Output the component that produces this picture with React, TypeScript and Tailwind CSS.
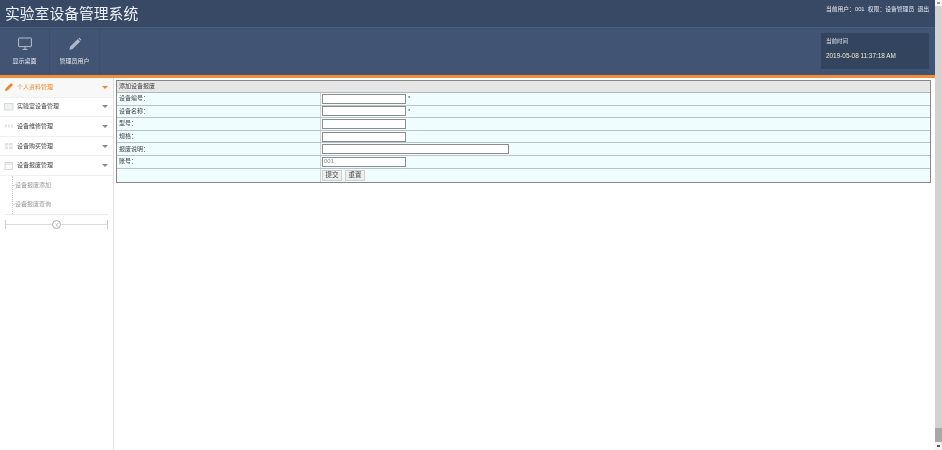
import React from "react";
import { ChevronLeft } from "lucide-react";

const cjk = "font-['Liberation_Sans','Noto_Sans_CJK_SC',sans-serif]";

function Caret({ color = "border-t-[#777]" }: { color?: string }) {
  return <span className={`w-0 h-0 border-x-[3px] border-x-transparent border-t-[3px] ${color}`} />;
}

function MenuIcon({ kind }: { kind: string }) {
  if (kind === "pencil")
    return (
      <svg width="10" height="10" viewBox="0 0 10 10"><path d="M1 9l.6-2.6L7 1l2 2-5.4 5.4z" fill="#e98a2e" /></svg>
    );
  if (kind === "tablet")
    return (
      <svg width="10" height="10" viewBox="0 0 10 10"><rect x="0.5" y="1.5" width="8.5" height="6.5" fill="#f0f1f2" stroke="#d8dadd" /></svg>
    );
  if (kind === "bars")
    return (
      <svg width="10" height="10" viewBox="0 0 10 10"><path d="M1 3.5h1.6v3H1zM4 3.5h1.6v3H4zM7 3.5h1.6v3H7z" fill="#dcdee1" /></svg>
    );
  if (kind === "grid")
    return (
      <svg width="10" height="10" viewBox="0 0 10 10"><path d="M.8 2h3.4v2.6H.8zM5 2h3.6v2.6H5zM.8 5.4h3.4V8H.8zM5 5.4h3.6V8H5z" fill="#dfe1e4" /></svg>
    );
  return (
    <svg width="10" height="10" viewBox="0 0 10 10"><rect x="1" y="1.5" width="7.5" height="7" fill="#fbfbfb" stroke="#d8dadd" /><path d="M1 3h7.5" stroke="#d8dadd" /></svg>
  );
}

const menus = [
  { icon: "pencil", label: "个人资料管理", active: true },
  { icon: "tablet", label: "实验室设备管理" },
  { icon: "bars", label: "设备维修管理" },
  { icon: "grid", label: "设备购买管理" },
  { icon: "cal", label: "设备报废管理" },
];

const rows = [
  { label: "设备编号：", w: "w-[84px]", star: true },
  { label: "设备名称：", w: "w-[84px]", star: true },
  { label: "型号：", w: "w-[84px]" },
  { label: "规格：", w: "w-[84px]" },
  { label: "报废说明：", w: "w-[187px]" },
  { label: "账号：", w: "w-[84px]", value: "001" },
];

export default function App() {
  return (
    <div className={`h-[450px] w-[942px] overflow-hidden flex bg-white blur-[0.35px] ${cjk}`}>
      <div className="w-[935px] flex flex-col shrink-0">
        <header className="h-[78px] shrink-0 flex flex-col bg-[#415473] border-b-[3px] border-[#ef8f3a]">
          <div className="h-[28px] shrink-0 flex justify-between items-center bg-[#384966] border-b border-[#4a5e7e] pl-[5px] pr-[6px]">
            <h1 className="text-[14.8px] leading-none mt-[1px] text-[#eef1f5]">实验室设备管理系统</h1>
            <div className="text-[5.8px] text-[#e4e8ee] -mt-[9px] whitespace-nowrap">当前用户：001 &nbsp;权限：设备管理员 &nbsp;退出</div>
          </div>
          <div className="flex-1 flex justify-between">
            <div className="flex">
              <div className="w-[50px] flex flex-col items-center pt-[9px] border-r border-[#3c4f6e]">
                <svg width="14" height="14" viewBox="0 0 14 14" fill="none" stroke="#c5ccd6" strokeWidth="0.9">
                  <rect x="0.6" y="1" width="12.8" height="8.6" rx="0.6" />
                  <path d="M7 9.6v2.6M4.6 12.4h4.8" />
                </svg>
                <span className="text-[6px] leading-none mt-[7px] text-[#e2e6ec]">显示桌面</span>
              </div>
              <div className="w-[50px] flex flex-col items-center pt-[9px] border-r border-[#3c4f6e]">
                <svg width="14" height="14" viewBox="0 0 14 14">
                  <path d="M1.4 13l.8-3.4L9.8 2l2.4 2.4-7.6 7.6z" fill="#aeb7c4" />
                  <path d="M10.4 1.4l.8-.8 2.2 2.2-.8.8z" fill="#aeb7c4" />
                </svg>
                <span className="text-[6px] leading-none mt-[7px] text-[#e2e6ec]">管理员用户</span>
              </div>
            </div>
            <div className="w-[108px] h-[36px] mt-[5px] mr-[6px] bg-[#33445f] pl-[5px] pt-[6px] flex flex-col">
              <span className="text-[5.5px] leading-none text-[#dde1e8]">当前时间</span>
              <span className="text-[6.4px] leading-none mt-[8px] text-[#efeccd] whitespace-nowrap">2019-05-08 11:37:18 AM</span>
            </div>
          </div>
        </header>
        <div className="flex-1 flex min-h-0">
          <aside className="w-[114px] shrink-0 border-r border-[#e0e0e0] bg-white flex flex-col">
            {menus.map((m) => (
              <div
                key={m.label}
                className={`h-[19.6px] shrink-0 flex items-center pl-[4px] pr-[5px] border-b border-[#f0f0f0] ${m.active ? "bg-[#f8f8f8]" : ""}`}
              >
                <MenuIcon kind={m.icon} />
                <span className={`ml-[3px] text-[6px] flex-1 ${m.active ? "text-[#e98a2e]" : "text-[#444]"}`}>{m.label}</span>
                <Caret color={m.active ? "border-t-[#e98a2e]" : "border-t-[#888]"} />
              </div>
            ))}
            <div className="flex flex-col ml-[12px] border-l border-dotted border-[#ccc]">
              {["设备报废添加", "设备报废查询"].map((s) => (
                <div key={s} className="h-[19px] flex items-center text-[6px] text-[#999] whitespace-nowrap">-{s}</div>
              ))}
            </div>
            <div className="border-t border-[#ececec] h-[21px] mx-[5px] flex items-center">
              <span className="h-[9px] border-l border-[#ccc]" />
              <span className="flex-1 border-t border-[#ddd]" />
              <span className="w-[9px] h-[9px] rounded-full border border-[#aaa] flex items-center justify-center bg-white">
                <ChevronLeft size={6} color="#666" />
              </span>
              <span className="flex-1 border-t border-[#ddd]" />
              <span className="h-[9px] border-l border-[#ccc]" />
            </div>
          </aside>
          <main className="flex-1 pl-[2px] pt-[2px] pr-[4px]">
            <div className="border border-[#858789] text-[6px] text-[#444]">
              <div className="h-[12px] bg-[#e6e6e6] border-b border-[#b4b6b7] flex items-center pl-[2px]">添加设备报废</div>
              {rows.map((r) => (
                <div key={r.label} className="h-[12.6px] bg-[#f0fdfe] border-b border-[#b9c3c5] flex">
                  <div className="w-[204px] shrink-0 flex items-center pl-[2px] border-r border-[#ccd4d6]">{r.label}</div>
                  <div className="flex items-center pl-[1px]">
                    <div className={`${r.w} h-[10px] bg-white border border-[#8c8c8c] flex items-center pl-[1px] text-[#888]`}>{r.value}</div>
                    {r.star && <span className="ml-[2px]">*</span>}
                  </div>
                </div>
              ))}
              <div className="h-[13.5px] bg-[#f0fdfe] flex">
                <div className="w-[204px] shrink-0 border-r border-[#ccd4d6]" />
                <div className="flex items-center pl-[1px] gap-[3px]">
                  <button className="w-[20px] h-[11px] bg-[#eeeeee] border border-[#cfcfcf] text-[6.5px] leading-none text-[#444]">提交</button>
                  <button className="w-[20px] h-[11px] bg-[#eeeeee] border border-[#cfcfcf] text-[6.5px] leading-none text-[#444]">重置</button>
                </div>
              </div>
            </div>
          </main>
        </div>
      </div>
      <div className="w-[7px] shrink-0 bg-[#d2d2d2] flex flex-col">
        <div className="h-[6px] bg-[#f4f4f4] flex items-center justify-center">
          <span className="w-[3px] h-[2px] bg-[#999]" />
        </div>
        <div className="flex-1" />
        <div className="h-[14px] bg-[#a8a8a8]" />
        <div className="h-[8px] bg-[#f4f4f4] flex items-center justify-center">
          <span className="w-[3px] h-[2px] bg-[#555]" />
        </div>
      </div>
    </div>
  );
}
